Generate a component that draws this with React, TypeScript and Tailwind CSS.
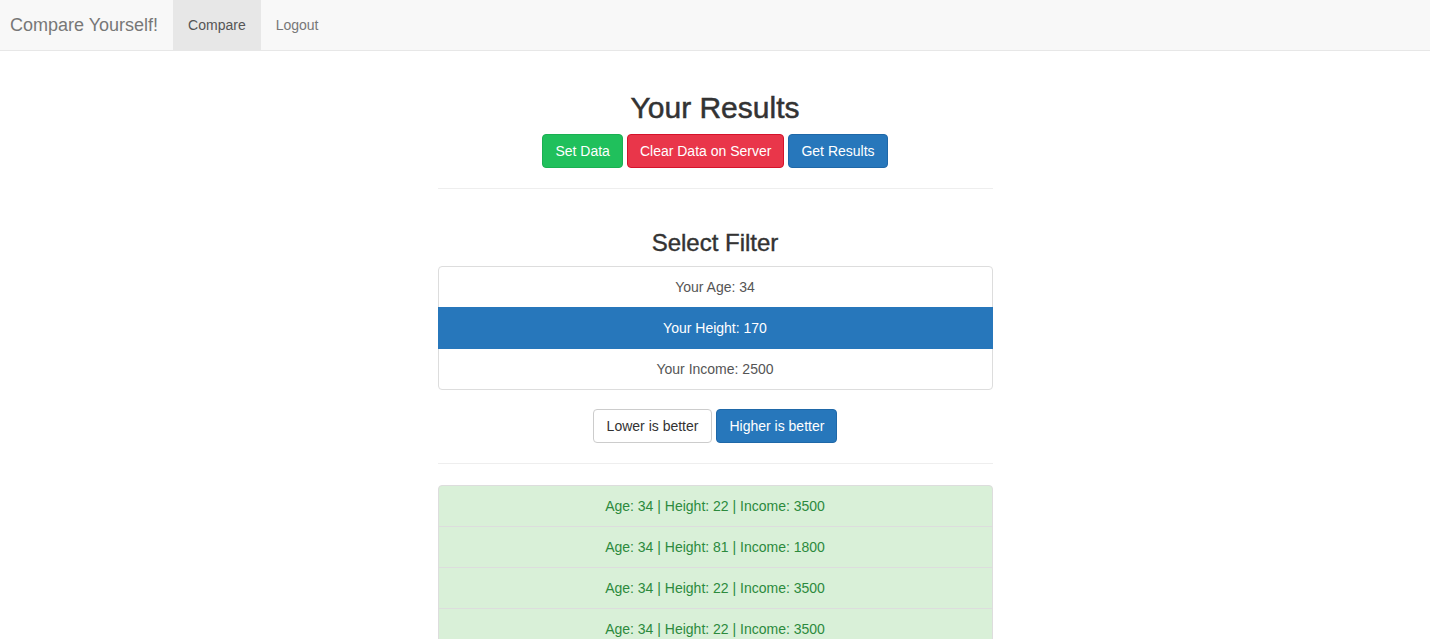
const filters = [
  { label: "Your Age: 34", active: false },
  { label: "Your Height: 170", active: true },
  { label: "Your Income: 2500", active: false },
];

const results = [
  "Age: 34 | Height: 22 | Income: 3500",
  "Age: 34 | Height: 81 | Income: 1800",
  "Age: 34 | Height: 22 | Income: 3500",
  "Age: 34 | Height: 22 | Income: 3500",
];

const App = () => {
  return (
    <div className="min-h-screen bg-white text-[14px] leading-[20px] text-[#333] font-['Liberation_Sans',Arial,sans-serif]">
      <nav className="flex h-[51px] border-b border-[#e7e7e7] bg-[#f8f8f8]">
        <div className="pl-[10px] pr-[15px] py-[15px] text-[18px] leading-[20px] text-[#777]">
          Compare Yourself!
        </div>
        <div className="px-[15px] py-[15px] bg-[#e7e7e7] text-[#555]">Compare</div>
        <div className="px-[15px] py-[15px] text-[#777]">Logout</div>
      </nav>

      <div className="mx-auto pt-10 w-[555px]">
        <h2 className="mb-[10px] text-center text-[30px] leading-[33px] font-medium text-[#333] [-webkit-text-stroke:0.5px_#333]">
          Your Results
        </h2>
        <div className="flex justify-center gap-1">
          <button className="h-[34px] px-3 rounded border border-[#1ab052] bg-[#20c05c] text-white">
            Set Data
          </button>
          <button className="h-[34px] px-3 rounded border border-[#d5132b] bg-[#e9364a] text-white">
            Clear Data on Server
          </button>
          <button className="h-[34px] px-3 rounded border border-[#1f68a8] bg-[#2777bb] text-white">
            Get Results
          </button>
        </div>
        <div className="my-5 border-t border-[#eee]" />

        <div className="pt-5">
          <h3 className="mb-[10px] text-center text-[24px] leading-[27px] font-medium [-webkit-text-stroke:0.4px_#333]">
            Select Filter
          </h3>
          <div className="mb-5 flex flex-col">
            {filters.map((f) => (
              <div
                key={f.label}
                className={`relative -mb-px px-[15px] py-[10px] text-center border first:rounded-t last:rounded-b ${
                  f.active
                    ? "z-10 bg-[#2777bb] border-[#2777bb] text-white"
                    : "bg-white border-[#ddd] text-[#555]"
                }`}
              >
                {f.label}
              </div>
            ))}
          </div>
          <div className="flex justify-center gap-1">
            <button className="h-[34px] px-[13px] rounded border border-[#ccc] bg-white text-[#333]">
              Lower is better
            </button>
            <button className="h-[34px] px-3 rounded border border-[#1f68a8] bg-[#2777bb] text-white">
              Higher is better
            </button>
          </div>
          <div className="mt-5 mb-[21px] border-t border-[#eee]" />
        </div>

        <div className="flex flex-col">
          {results.map((r, i) => (
            <div
              key={i}
              className="-mb-px px-[15px] py-[10px] text-center border border-[#ddd] bg-[#d9f0d8] text-[#2c8a3d] first:rounded-t last:rounded-b"
            >
              {r}
            </div>
          ))}
        </div>
      </div>
    </div>
  );
};

export default App;
